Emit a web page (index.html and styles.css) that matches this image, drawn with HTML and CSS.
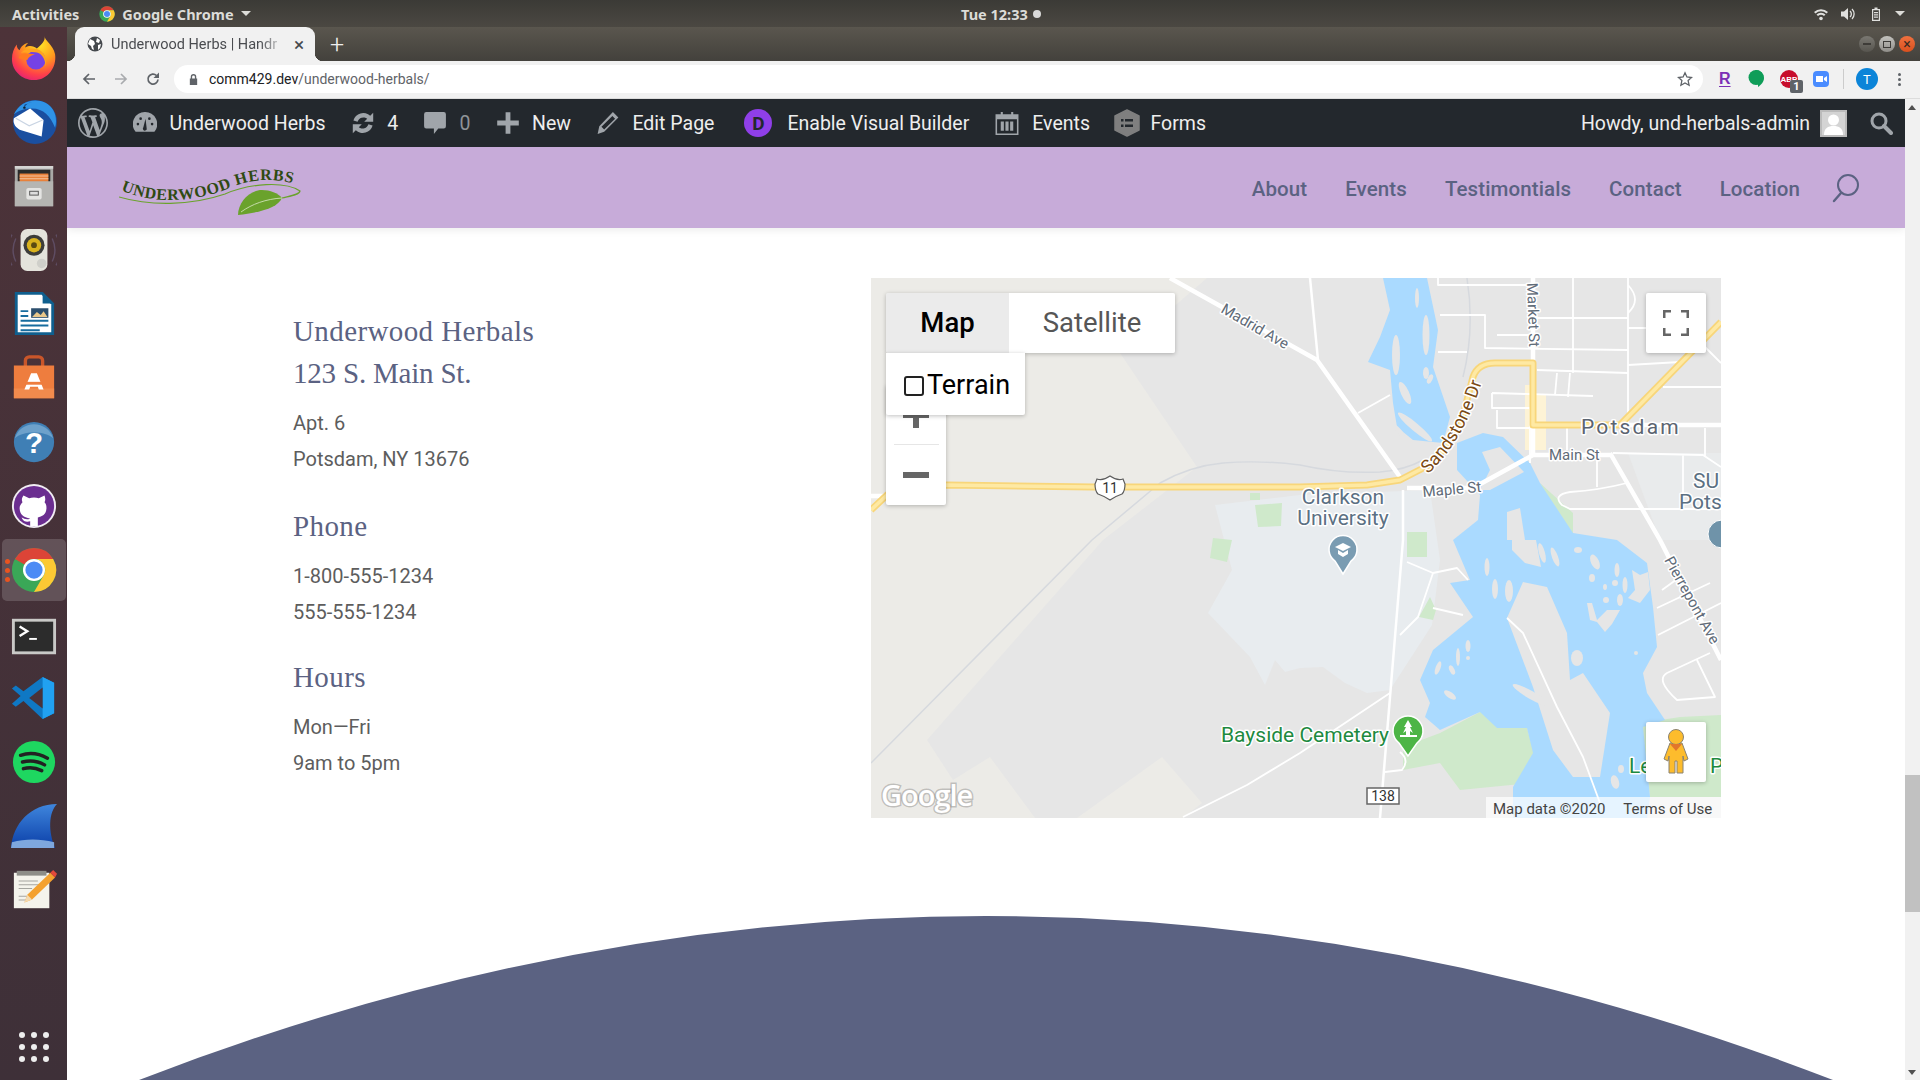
FILE: index.html
```html
<!DOCTYPE html>
<html lang="en">
<head>
<meta charset="utf-8">
<title>Underwood Herbs</title>
<link rel="stylesheet" href="styles.css">
</head>
<body>
<svg class="defs" width="0" height="0" aria-hidden="true">
  <symbol id="chrome" viewBox="0 0 48 48">
    <circle cx="24" cy="24" r="23" fill="#3aa757"/>
    <path d="M24 1a23 23 0 0 1 20 11.5H24a11.5 11.5 0 0 0-10 5.8L4.1 12.5A23 23 0 0 1 24 1z" fill="#dc4437"/>
    <path d="M44 12.500a23 23 0 0 1-20 34.500l10-17.200A11.500 11.500 0 0 0 24 12.500z" fill="#fcc934"/>
    <circle cx="24" cy="24" r="11.500" fill="#fff"/>
    <circle cx="24" cy="24" r="9" fill="#4c8bf5"/>
  </symbol>
</svg>

<header class="topbar">
  <div class="top-left">
    <span class="top-label">Activities</span>
    <span class="top-app"><svg class="ic16"><use href="#chrome"/></svg><span class="top-label">Google Chrome</span><i class="caret"></i></span>
  </div>
  <div class="top-clock"><span class="top-label">Tue 12:33</span><i class="clock-dot"></i></div>
  <div class="top-right">
    <svg class="tray" viewBox="0 0 16 16"><path d="M1 6a10 10 0 0 1 14 0l-1.500 1.500a8 8 0 0 0-11 0zM3.500 8.500a6.500 6.500 0 0 1 9 0L11 10a4.500 4.500 0 0 0-6 0z" fill="#e0e0de"/><circle cx="8" cy="12.500" r="1.800" fill="#e0e0de"/></svg>
    <svg class="tray" viewBox="0 0 16 16"><path d="M1 5.500h3L8 2v12l-4-3.500H1z" fill="#e0e0de"/><path d="M10 5a4 4 0 0 1 0 6M12 3a7 7 0 0 1 0 10" stroke="#e0e0de" stroke-width="1.300" fill="none"/></svg>
    <svg class="tray" viewBox="0 0 16 16"><path d="M4 3h2.500V1.500h3V3H12v12H4zM5.200 4.200v9.600h5.600V4.200z" fill="#e0e0de"/><path d="M6 6h4v1.200H6zM6 8.300h4v1.200H6zM6 10.600h4v1.200H6z" fill="#e0e0de"/></svg>
    <i class="caret caret-tray"></i>
  </div>
</header>

<div class="desk">
  <nav class="dock">
    <div class="dock-item">
      <svg class="dock-ic" viewBox="0 0 48 48"><defs><radialGradient id="ff" cx=".65" cy=".2" r=".95"><stop offset="0" stop-color="#ffe226"/><stop offset=".4" stop-color="#ff9a1e"/><stop offset=".72" stop-color="#ff3f4a"/><stop offset="1" stop-color="#d8148a"/></radialGradient></defs><path d="M35 1c0 5 9 9 11 19 2 14-8 27-22 27C11 47 1 37 1 25c0-6 2-11 5-15 0 3 1 5 3 6 1-4 5-7 9-8-3 3-3 4-3 5 5-3 9-1 12 1 5-4 9-8 8-13z" fill="url(#ff)"/><circle cx="26" cy="26" r="10" fill="#7542e5"/><path d="M10 19c6-6 15-6 20-3 5 3 8 9 6 17 0-9-5-15-11-15-5 0-9-1-15 1z" fill="#ffa41f"/><path d="M8 24c1-3 3-5 7-5 4 0 6 1 10 1-4 1-7 3-8 6-3 0-6-1-9-2z" fill="#ff7a1f"/></svg>
    </div>
    <div class="dock-item">
      <svg class="dock-ic" viewBox="0 0 48 48"><circle cx="25" cy="24" r="23" fill="#1a4fa0"/><path d="M3 16C9 3 24-2 36 4c9 5 13 15 10 26-5-12-12-20-24-20-8 0-14 2-19 6z" fill="#2f93e6"/><path d="M14 6l8-3c-5 1-8 4-8 7z" fill="#0d3d82"/><path d="M3 20l17-10 14 12-2 17-23-7C3 28 2 24 3 20z" fill="#fff"/><path d="M5 20l14 8 14-6" stroke="#c9d4e3" stroke-width="1.200" fill="none"/><circle cx="14" cy="9" r="1.300" fill="#123"/></svg>
    </div>
    <div class="dock-item">
      <svg class="dock-ic" viewBox="0 0 48 48"><path d="M4 3h40v42H4z" fill="#a9a9a6"/><path d="M4 3h40v3H4z" fill="#d5d5d3"/><path d="M7 7h34v13H7z" fill="#2b2b2b"/><path d="M9 11h30v9H9z" fill="#e8813a"/><path d="M9 13h30v1H9zM9 16h30v1H9z" fill="#f3c29d"/><path d="M4 19h40v26H4z" fill="#b5b5b2"/><rect x="16" y="26" width="16" height="12" rx="2" fill="#e4e4e2"/><rect x="19" y="29" width="10" height="5" fill="#555"/><rect x="20" y="30" width="8" height="3" fill="#ddd"/></svg>
    </div>
    <div class="dock-item">
      <svg class="dock-ic" viewBox="0 0 48 48"><path d="M5 12a28 28 0 0 0 0 24M43 12a28 28 0 0 1 0 24M1 8a34 34 0 0 0 0 32M47 8a34 34 0 0 1 0 32" stroke="#5f4d63" stroke-width="1.500" fill="none"/><rect x="10" y="2" width="28" height="44" rx="7" fill="#e4e3dc"/><circle cx="24" cy="19" r="11" fill="#3c3c3a"/><circle cx="24" cy="19" r="7.500" fill="#d9b21e"/><circle cx="24" cy="19" r="3" fill="#5b4b12"/><circle cx="32" cy="38" r="5" fill="#cfcfca"/></svg>
    </div>
    <div class="dock-item">
      <svg class="dock-ic" viewBox="0 0 48 48"><path d="M4 1h29l12 12v33H4z" fill="#0f5f8e"/><path d="M7 4h25l10 10v29H7z" fill="#fff"/><path d="M33 1l12 12H33z" fill="#0f5f8e"/><path d="M10 20h8v2h-8zM10 25h8v2h-8zM10 30h29v2H10zM10 35h29v2H10zM10 40h20v2H10z" fill="#176c9e"/><rect x="21" y="18" width="18" height="10" fill="#2c4f6e"/><path d="M22 27l5-5 4 3 3-4 4 6z" fill="#e9c78a"/></svg>
    </div>
    <div class="dock-item">
      <svg class="dock-ic" viewBox="0 0 48 48"><path d="M15 12V6a4 4 0 0 1 4-4h10a4 4 0 0 1 4 4v6" stroke="#c9562a" stroke-width="3.500" fill="none"/><path d="M3 11h42v34H3z" fill="#ee7d3e"/><path d="M3 35h42v10H3z" fill="#f28b4d"/><path d="M21 19h6l7 17h-5l-1-3h-8l-1 3h-5z" fill="#fff"/><rect x="15" y="28" width="18" height="3" fill="#ee7d3e"/></svg>
    </div>
    <div class="dock-item">
      <svg class="dock-ic" viewBox="0 0 48 48"><circle cx="24" cy="24" r="21" fill="#3f7fb5"/><path d="M4 20a21 21 0 0 1 40 0c-8-8-32-8-40 0z" fill="#6da1cb"/><text class="help-q" x="24" y="35" text-anchor="middle">?</text></svg>
    </div>
    <div class="dock-item">
      <svg class="dock-ic" viewBox="0 0 48 48"><circle cx="24" cy="24" r="23" fill="#f1edf3"/><circle cx="24" cy="24" r="21" fill="#6b2e90"/><path d="M13 13l6 3c3-1 7-1 10 0l6-3c1 3 1 5 0 7 2 2 2 4 2 6 0 7-5 9-9 10v9h-8v-5c-3 1-7 1-9-4 3 1 5 3 9 1-7-1-11-4-11-11 0-2 1-4 3-6-1-2-1-4 1-7z" fill="#fff"/></svg>
    </div>
    <div class="dock-item dock-active">
      <i class="run-dot"></i><i class="run-dot"></i><i class="run-dot"></i>
      <svg class="dock-ic"><use href="#chrome"/></svg>
    </div>
    <div class="dock-item dock-low">
      <svg class="dock-ic" viewBox="0 0 48 48"><rect x="1" y="5" width="46" height="37" fill="#c9c9c7"/><rect x="4" y="8" width="40" height="31" fill="#2c2c2c"/><path d="M9 13l8 5-8 5" stroke="#fff" stroke-width="2.500" fill="none"/><path d="M19 25h8v2h-8z" fill="#fff"/></svg>
    </div>
    <div class="dock-item">
      <svg class="dock-ic" viewBox="0 0 48 48"><path d="M33 2l12 6v32l-12 6-20-19-8 6-4-3 9-8-9-8 4-3 8 6z" fill="#0f78c4"/><path d="M33 2l12 6v32l-12 6z" fill="#21a1f1"/><path d="M33 13L19 24l14 11z" fill="#4a3239"/></svg>
    </div>
    <div class="dock-item">
      <svg class="dock-ic" viewBox="0 0 48 48"><circle cx="24" cy="24" r="22" fill="#1ed760"/><path d="M10 17c9-3 19-2 28 3M12 24c8-2 16-1 23 3M13 31c7-2 13-1 19 2" stroke="#222" stroke-width="3.600" stroke-linecap="round" fill="none"/></svg>
    </div>
    <div class="dock-item">
      <svg class="dock-ic" viewBox="0 0 48 48"><defs><linearGradient id="ws" x1="0" y1="0" x2="0" y2="1"><stop offset="0" stop-color="#3f86dd"/><stop offset="1" stop-color="#0b3fa8"/></linearGradient></defs><path d="M48 1C39 10 39 30 46 47H0C2 22 20 1 48 1z" fill="url(#ws)"/><path d="M1 41c14-4 29-4 44 0v6H0z" fill="#7ea7dd"/></svg>
    </div>
    <div class="dock-item">
      <svg class="dock-ic" viewBox="0 0 48 48"><rect x="3" y="6" width="37" height="37" fill="#f4f3ec"/><path d="M6 4h31v5H6z" fill="#8d8d88"/><path d="M8 14h20v1H8zM8 18h24v1H8zM8 22h14v1H8zM8 30h12v1H8zM8 34h8v1H8z" fill="#a5a5a0"/><path d="M14 37l3-8 24-23 5 5-24 23z" fill="#f4a12f"/><path d="M41 6l3-3 4 4-2 4z" fill="#e3493b"/><path d="M14 37l3-8 5 5z" fill="#f3d9b0"/></svg>
    </div>
    <div class="dock-apps">
      <i></i><i></i><i></i><i></i><i></i><i></i><i></i><i></i><i></i>
    </div>
  </nav>

  <div class="browser">
    <div class="tabstrip">
      <div class="tab">
        <svg class="fav" viewBox="0 0 16 16"><circle cx="8" cy="8" r="7.500" fill="#45494d"/><path d="M3 3l4 2 1 3-2 2 1 4-2-1-1-3-3-2zM10 2l3 2-1 3-3-1zM11 9l3-1-1 4-2 2z" fill="#fff"/></svg>
        <span class="tab-title">Underwood Herbs | Handr</span>
        <span class="tab-x">×</span>
      </div>
      <span class="tab-new">+</span>
      <div class="winctl">
        <span class="win-btn"><i class="win-min"></i></span>
        <span class="win-btn win-light"><i class="win-max"></i></span>
        <span class="win-btn win-close">×</span>
      </div>
    </div>
    <div class="toolbar">
      <svg class="nav-ic nav-back" viewBox="0 0 16 16"><path d="M14 8H3M8 3L3 8l5 5" stroke="#5f6368" stroke-width="1.700" fill="none"/></svg>
      <svg class="nav-ic nav-fwd" viewBox="0 0 16 16"><path d="M2 8h11M8 3l5 5-5 5" stroke="#a9abae" stroke-width="1.700" fill="none"/></svg>
      <svg class="nav-ic nav-reload" viewBox="0 0 16 16"><path d="M13 8.500A5 5 0 1 1 11.500 4.500" stroke="#5f6368" stroke-width="1.700" fill="none"/><path d="M14 1.500V7H8.500z" fill="#5f6368"/></svg>
      <div class="omnibox">
        <svg class="lock" viewBox="0 0 12 14"><path d="M3 6V4a3 3 0 0 1 6 0v2h1v7H2V6zm1.500 0h3V4a1.500 1.500 0 0 0-3 0z" fill="#5f6368"/></svg>
        <span class="url"><b>comm429.dev</b>/underwood-herbals/</span>
        <svg class="star" viewBox="0 0 16 16"><path d="M8 1.800l1.900 4.200 4.600.5-3.400 3.100 1 4.600L8 11.900l-4.100 2.300 1-4.600L1.500 6.500l4.600-.5z" stroke="#5f6368" stroke-width="1.300" fill="none"/></svg>
      </div>
      <div class="exts">
        <span class="ext-r">R</span>
        <svg class="ext" viewBox="0 0 18 20"><path d="M9 1a8 8 0 0 1 8 8c0 4-3 7-6 9v-2.500A8 8 0 0 1 9 1z" fill="#0f9d58"/><circle cx="9" cy="8.500" r="7.500" fill="#0f9d58"/></svg>
        <span class="ext-abp">ABP<em>1</em></span>
        <svg class="ext ext-zoom" viewBox="0 0 18 18"><rect x="1" y="1" width="16" height="16" rx="4" fill="#4a8cff"/><path d="M4 6h7v6H4zM12 8l3-2v6l-3-2z" fill="#fff"/></svg>
        <i class="ext-sep"></i>
        <span class="profile">T</span>
        <span class="kebab"><i></i><i></i><i></i></span>
      </div>
    </div>

    <div class="viewport">
      <div class="column">
        <div class="adminbar">
          <svg class="ab-wp" viewBox="0 0 20 20"><path d="M20 10c0-5.510-4.490-10-10-10C4.480 0 0 4.490 0 10c0 5.520 4.480 10 10 10 5.510 0 10-4.480 10-10zM7.780 15.370L4.370 6.220c.55-.02 1.170-.08 1.170-.08.5-.06.44-1.130-.06-1.110 0 0-1.450.11-2.370.11-.18 0-.37 0-.58-.01C4.120 2.690 6.870 1.110 10 1.110c2.330 0 4.450.87 6.050 2.340-.68-.11-1.650.39-1.650 1.580 0 .74.45 1.360.9 2.100.35.61.55 1.360.55 2.460 0 1.490-1.400 5-1.400 5l-3.030-8.370c.54-.02.82-.17.82-.17.5-.05.44-1.250-.06-1.220 0 0-1.440.12-2.380.12-.87 0-2.330-.12-2.330-.12-.5-.03-.56 1.200-.06 1.220l.92.08 1.260 3.410zM17.410 10c.24-.64.74-1.870.43-4.250.7 1.290 1.050 2.710 1.050 4.250 0 3.290-1.730 6.240-4.520 7.780 1.010-2.710 2.020-5.020 3.040-7.780zM6.100 18.090C3.120 16.650 1.110 13.530 1.110 10c0-1.300.23-2.480.72-3.590C3.250 10.300 4.670 14.200 6.100 18.090zm4.030-6.630l2.580 6.980c-.86.29-1.760.45-2.710.45-.79 0-1.570-.11-2.290-.33.81-2.380 1.620-4.740 2.420-7.100z" fill="#a0a5aa"/></svg>
          <div class="ab-item">
            <svg class="ab-ic" viewBox="1 1 22 22"><path d="M12 2a11 11 0 0 0-9 17.500l.5.500h17l.5-.500A11 11 0 0 0 12 2z" fill="#a0a5aa"/><path d="M12.500 8l-2 8a1.800 1.800 0 1 0 3 .5z" fill="#23282d"/><circle cx="5.500" cy="13" r="1.200" fill="#23282d"/><circle cx="8" cy="8" r="1.200" fill="#23282d"/><circle cx="16" cy="8" r="1.200" fill="#23282d"/><circle cx="18.500" cy="13" r="1.200" fill="#23282d"/></svg>
            <span>Underwood Herbs</span>
          </div>
          <div class="ab-item">
            <svg class="ab-ic" viewBox="2 2 20 20"><path d="M4 10a8.500 8.500 0 0 1 14-4l2.500-2.500V11h-7.500l2.500-2.500A5 5 0 0 0 7.500 11zM20 14a8.500 8.500 0 0 1-14 4l-2.500 2.500V13H11l-2.500 2.500a5 5 0 0 0 8 -2.500z" fill="#a0a5aa"/></svg>
            <span>4</span>
          </div>
          <div class="ab-item ab-dim">
            <svg class="ab-ic" viewBox="1 2 22 22"><path d="M4 3h16a2 2 0 0 1 2 2v11a2 2 0 0 1-2 2h-5l-4 5v-5H4a2 2 0 0 1-2-2V5a2 2 0 0 1 2-2z" fill="#a0a5aa"/></svg>
            <span>0</span>
          </div>
          <div class="ab-item">
            <svg class="ab-ic" viewBox="2 2 20 20"><path d="M10 3h4v7h7v4h-7v7h-4v-7H3v-4h7z" fill="#a0a5aa"/></svg>
            <span>New</span>
          </div>
          <div class="ab-item">
            <svg class="ab-ic" viewBox="2 1 21 22"><path d="M17 2l5 5L9 20l-6 2 1.500-7zM6.500 15.500l2.500 2.500 10-10-2.500-2.500z" fill="#a0a5aa"/></svg>
            <span>Edit Page</span>
          </div>
          <div class="ab-item ab-divi">
            <span class="divi-d">D</span>
            <span>Enable Visual Builder</span>
          </div>
          <div class="ab-item ab-events">
            <svg class="ab-ic" viewBox="1 1 22 23"><path d="M6 2h2v4H6zM16 2h2v4h-2z" fill="#a0a5aa"/><path d="M1 4h22v20H1zM2.500 9v13.500h19V9z" fill="#a0a5aa"/><path d="M6 11h3v9H6zM10.500 11h3v9h-3zM15 11h3v9h-3z" fill="#a0a5aa"/></svg>
            <span>Events</span>
          </div>
          <div class="ab-item ab-forms">
            <svg class="ab-ic ab-hex" viewBox="0 0 26 28"><path d="M13 1l12 6v14l-12 6-12-6V7z" fill="#7f7f7f" stroke="#7f7f7f" stroke-linejoin="round" stroke-width="1.500"/><path d="M7 10h2.500v2.500H7zM11 10h8v2.500h-8zM7 15.500h2.500V18H7zM11 15.500h8V18h-8z" fill="#23282d"/></svg>
            <span>Forms</span>
          </div>
          <div class="ab-right">
            <span>Howdy, und-herbals-admin</span>
            <svg class="ab-avatar" viewBox="0 0 27 27"><rect width="27" height="27" fill="#bbb"/><rect x="2" y="2" width="23" height="23" fill="#d4d4d4"/><circle cx="13.500" cy="10" r="5.500" fill="#fff"/><path d="M4 25c0-7 4-9 9.500-9S23 18 23 25z" fill="#fff"/></svg>
            <svg class="ab-search" viewBox="0 0 24 24"><circle cx="10" cy="10" r="7" stroke="#a0a5aa" stroke-width="3" fill="none"/><path d="M15 15l7 7" stroke="#a0a5aa" stroke-width="4" stroke-linecap="round"/></svg>
          </div>
        </div>

        <main class="page">
          <header class="sitehead">
            <svg class="logo" viewBox="119 160 182 56">
              <defs><path id="logoarc" d="M121 190C150 203 190 205 235 186C255 178 280 178 300 186"/></defs>
              <text class="logo-text"><textPath href="#logoarc">UNDERWOOD HERBS</textPath></text>
              <path d="M119 197C150 206 190 206 225 194C250 183 285 181 300 191C299 195 290 196 282 198" stroke="#6aa22c" stroke-width="1.200" fill="none"/>
              <path d="M238 215C238 202 250 190 262 190C270 190 278 193 282 198C277 208 262 212 238 215z" fill="#6aa22c"/>
              <path d="M241 212C252 204 266 199 282 198" stroke="#d9e8c6" stroke-width=".8" fill="none"/>
            </svg>
            <nav class="sitenav">
              <a>About</a><a>Events</a><a>Testimontials</a><a>Contact</a><a>Location</a>
              <svg class="nav-search" viewBox="0 0 28 30"><circle cx="16" cy="12" r="10" stroke="#5b6282" stroke-width="2" fill="none"/><path d="M9 20L2 28" stroke="#5b6282" stroke-width="2.400" stroke-linecap="round"/></svg>
            </nav>
          </header>

          <section class="contact">
            <div class="info">
              <h2 class="info-first">Underwood Herbals<br><span class="addr">123 S. Main St.</span></h2>
              <p>Apt. 6<br>Potsdam, NY 13676</p>
              <h2 class="info-phone">Phone</h2>
              <p>1-800-555-1234<br>555-555-1234</p>
              <h2 class="info-hours">Hours</h2>
              <p>Mon—Fri<br>9am to 5pm</p>
            </div>
            <div class="map">
              <svg class="map-art" viewBox="871 278 850 540" width="850" height="540">
                <rect x="871" y="278" width="850" height="540" fill="#ecebe7"/>
                <path d="M1207 278L1120 353L1197 467L1103 540L927 740L953 780L990 757L1035 818L1077 818L1162 757L1202 803L1183 818L1721 818V278z" fill="#e6e6e6"/>
                <path d="M1215 505L1300 495L1430 490L1440 560L1432 625L1390 690L1367 693L1345 683L1323 667L1300 668L1285 672L1275 660L1265 685L1250 657L1208 613L1232 570z" fill="#e8ecef"/>
                <path d="M1628 453H1721V540L1660 540z" fill="#e9ebec"/>
                <path d="M1525 385H1532V450H1525zM1534 395H1546V450H1534z" fill="#fdf3d6"/>
                <g fill="#cfe9cb">
                  <path d="M1255 505L1282 503L1281 526L1258 527zM1250 493H1260V500H1250zM1213 538L1232 540L1227 562L1210 558zM1407 532H1427V557H1407zM1430 597L1436 610L1433 620L1419 617zM1540 483L1573 513V537L1568 532z"/>
                  <path d="M1403 747L1440 733L1480 712L1495 710L1497 728L1527 728L1534 753L1530 783L1460 790L1440 763L1403 770z"/>
                  <path d="M1642 723L1680 717L1721 715V797H1650z"/>
                </g>
                <g fill="#aadaff">
                  <path d="M1383 278H1427L1438 330L1433 367L1450 417L1443 443L1413 440L1397 427L1393 403L1390 370L1368 362L1380 337L1390 310z"/>
                  <path d="M1457 443L1483 433L1503 437L1530 463L1540 483L1573 533L1617 540L1647 563L1653 607L1657 647L1643 673L1647 693L1665 720L1643 727L1650 797L1647 818H1513L1513 787L1533 753L1527 728L1497 728L1480 712L1440 730L1425 717L1430 703L1420 680L1433 650L1473 617L1450 583L1470 580L1453 540L1478 520L1480 495L1457 470z"/>
                </g>
                <g fill="#e6e6e6">
                  <path d="M1507 618L1523 582L1547 587L1567 633L1570 680L1583 673L1610 713L1600 777L1573 777L1553 750L1533 687z"/>
                  <path d="M1482 452L1500 447L1524 472L1490 490L1480 490L1490 470zM1507 512L1520 508L1525 540H1507zM1512 540H1536L1541 567L1525 563L1512 550z"/>
                  <ellipse cx="1417" cy="298" rx="2" ry="10"/><ellipse cx="1426" cy="335" rx="3.500" ry="20"/><ellipse cx="1396" cy="355" rx="4" ry="20"/><ellipse cx="1426" cy="373" rx="3" ry="6"/><ellipse cx="1430" cy="379" rx="2.500" ry="5" transform="rotate(25 1430 379)"/><ellipse cx="1405" cy="393" rx="4" ry="12" transform="rotate(-25 1405 393)"/><ellipse cx="1415" cy="427" rx="4" ry="22" transform="rotate(-50 1415 427)"/><ellipse cx="1399" cy="431" rx="2.500" ry="8" transform="rotate(-40 1399 431)"/>
                  <ellipse cx="1487" cy="567" rx="2.500" ry="9"/><ellipse cx="1495" cy="589" rx="3" ry="10"/><ellipse cx="1509" cy="591" rx="4" ry="11"/><ellipse cx="1542" cy="553" rx="3" ry="10" transform="rotate(-15 1542 553)"/><ellipse cx="1555" cy="557" rx="3" ry="10" transform="rotate(-20 1555 557)"/><ellipse cx="1578" cy="550" rx="4" ry="3"/><ellipse cx="1595" cy="562" rx="4" ry="8" transform="rotate(-25 1595 562)"/><ellipse cx="1617" cy="570" rx="2.500" ry="7"/><ellipse cx="1592" cy="578" rx="3" ry="4"/><ellipse cx="1605" cy="587" rx="2" ry="3"/><ellipse cx="1615" cy="583" rx="3" ry="3"/><ellipse cx="1625" cy="585" rx="2.500" ry="8"/><ellipse cx="1606" cy="600" rx="3" ry="3"/><ellipse cx="1620" cy="600" rx="3" ry="6"/>
                  <path d="M1632 570L1640 575L1648 572L1650 590L1640 603L1628 598L1635 590z"/>
                  <path d="M1587 603L1592 603L1597 620L1607 610L1620 610L1612 624L1605 632L1597 622L1590 620z"/>
                  <ellipse cx="1468" cy="646" rx="2.500" ry="6"/><ellipse cx="1458" cy="657" rx="2" ry="9"/><ellipse cx="1438" cy="668" rx="2.500" ry="7" transform="rotate(20 1438 668)"/><ellipse cx="1452" cy="670" rx="2.500" ry="5" transform="rotate(-25 1452 670)"/><ellipse cx="1468" cy="658" rx="2" ry="2"/><ellipse cx="1450" cy="695" rx="7" ry="3" transform="rotate(35 1450 695)"/><ellipse cx="1577" cy="658" rx="6" ry="8"/><ellipse cx="1615" cy="782" rx="4" ry="7" transform="rotate(-15 1615 782)"/><ellipse cx="1621" cy="769" rx="3" ry="4"/><ellipse cx="1636" cy="653" rx="2" ry="2"/><ellipse cx="1531" cy="695" rx="21" ry="4" transform="rotate(30 1531 695)"/>
                </g>
                <g class="rail">
                  <path d="M871 763L1092 540L1160 483Q1190 466 1223 463Q1260 460 1300 465Q1340 474 1380 472Q1405 470 1423 460"/>
                  <path d="M1467 278Q1475 330 1463 377"/>
                </g>
                <g class="road r1">
                  <path d="M1438 278V285H1533M1573 278V373M1628 278V425M1440 315H1485V348L1628 350M1533 318H1628M1497 335H1533M1438 352H1467M1537 370L1628 373M1557 373L1555 395M1570 373L1568 397M1492 393L1593 396M1492 393V408H1530M1497 410V428H1530M1628 365L1680 362M1663 387H1721M1628 285Q1642 300 1628 313M1628 328H1646M1705 347L1721 363M1613 453L1703 455L1721 467M1567 427V450M1597 457V487M1683 455V503M1705 428V457M1627 483Q1600 490 1570 492Q1552 495 1562 505L1570 509H1721M1358 413L1390 395M1407 562L1433 573L1457 568L1468 580M1433 573L1418 617L1400 635M1433 608L1463 615M1657 608L1710 583M1658 635L1721 603M1662 590L1680 577M1710 653L1667 673Q1655 680 1677 700L1715 697L1697 660M1183 817L1247 785L1300 753L1390 693M1400 752Q1410 760 1402 770L1385 772M1530 408V463M1507 618L1523 633L1557 707L1583 757L1600 803"/>
                </g>
                <g class="road r2">
                  <path d="M1310 278L1318 360M1403 490L1403 540L1380 818"/>
                </g>
                <g class="road r3">
                  <path d="M1170 278L1317 360L1400 477M871 496H887M1407 488H1473L1533 455H1610M1533 278V363M1533 425V455M1610 453L1660 540L1721 660M1620 425H1721"/>
                </g>
                <g class="hwy-o"><path d="M871 510L887 495L947 485L1093 487H1300L1367 485L1400 480L1433 463L1460 427L1473 377Q1478 363 1495 363H1533V425H1620L1721 322"/></g>
                <g class="hwy-i"><path d="M871 510L887 495L947 485L1093 487H1300L1367 485L1400 480L1433 463L1460 427L1473 377Q1478 363 1495 363H1533V425H1620L1721 322"/></g>

                <defs><path id="sandarc" d="M1428 474Q1463 442 1482 382"/></defs>
                <text class="lab lab-road" transform="translate(1220 312) rotate(30)">Madrid Ave</text>
                <text class="lab lab-road" transform="translate(1527 283) rotate(88)">Market St</text>
                <text class="lab lab-road" transform="translate(1664 560) rotate(61)">Pierrepont Ave</text>
                <text class="lab lab-hw"><textPath href="#sandarc">Sandstone Dr</textPath></text>
                <text class="lab lab-road" x="1549" y="460">Main St</text>
                <text class="lab lab-road" transform="translate(1423 497) rotate(-5)">Maple St</text>
                <text class="lab lab-city" x="1581" y="434">Potsdam</text>
                <text class="lab lab-poi" x="1343" y="504" text-anchor="middle">Clarkson</text>
                <text class="lab lab-poi" x="1343" y="525" text-anchor="middle">University</text>
                <text class="lab lab-poi" x="1693" y="488">SU</text>
                <text class="lab lab-poi" x="1679" y="509">Pots</text>
                <text class="lab lab-green" x="1221" y="742">Bayside Cemetery</text>
                <text class="lab lab-green" x="1629" y="773">Le</text>
                <text class="lab lab-green" x="1710" y="773">P</text>

                <path d="M1343 574L1335 561A14 14 0 1 1 1351 561z" fill="#7a9cb2" stroke="#fff" stroke-width="1.500"/>
                <path d="M1335 547L1343 543L1351 547L1343 551zM1338 550L1343 553L1348 550V554L1343 557L1338 554z" fill="#fff"/>
                <circle cx="1722" cy="534" r="14" fill="#6f93a9" stroke="#fff"/>
                <path d="M1408 756L1399 743A15 15 0 1 1 1417 743z" fill="#4db546" stroke="#fff" stroke-width="1.500"/>
                <path d="M1406 735V731L1403 733L1406 727L1404 727L1408 720L1412 727L1410 727L1413 733L1410 731V735zM1400 735H1417V737H1400z" fill="#fff"/>

                <path d="M1097 479Q1103 481 1110 476Q1117 481 1123 479L1125 484Q1125 491 1122 494Q1116 496 1110 500Q1104 496 1098 494Q1095 491 1095 484z" fill="#fff" stroke="#5c5c5c" stroke-width="1.200"/>
                <text class="shield" x="1110" y="493" text-anchor="middle">11</text>
                <rect x="1367" y="788" width="32" height="16" fill="#fff" stroke="#666" stroke-width="1.500"/>
                <text class="shield" x="1383" y="801" text-anchor="middle">138</text>
                <text class="google" x="881" y="806">Google</text>
              </svg>

              <div class="maptype">
                <span class="mt-btn mt-on">Map</span>
                <span class="mt-btn mt-sat">Satellite</span>
              </div>
              <div class="zoomctl">
                <div class="zoom-plus"></div>
                <div class="zoom-sep"></div>
                <div class="zoom-minus"></div>
              </div>
              <div class="terrain"><i class="check"></i>Terrain</div>
              <div class="fullscreen">
                <svg viewBox="0 0 26 26" width="26" height="26"><path d="M1 8V1H8M18 1H25V8M25 18V25H18M8 25H1V18" stroke="#666" stroke-width="3" fill="none"/></svg>
              </div>
              <div class="pegman">
                <svg viewBox="0 0 26 46" width="26" height="46"><path d="M7 14H19L25 30L21 32L20 27V44H14V32H12V44H6V27L5 32L1 30z" fill="#fdbc2c" stroke="#8a8270"/><circle cx="13" cy="8" r="7.500" fill="#fdbc2c" stroke="#8a8270"/><path d="M7 15H19L13 22z" fill="#e2762b"/></svg>
              </div>
              <div class="attrib"><span>Map data ©2020</span><span class="attrib-terms">Terms of Use</span></div>
            </div>
          </section>

          <svg class="divider" viewBox="0 0 1838 164" preserveAspectRatio="none" width="1838" height="164"><path d="M72 164Q919 -164 1766 164z" fill="#5b6282"/></svg>
        </main>
      </div>
      <aside class="scrollbar">
        <i class="sb-up"></i>
        <i class="sb-thumb"></i>
        <i class="sb-down"></i>
      </aside>
    </div>
  </div>
</div>
</body>
</html>
```
FILE: styles.css
```css
* { box-sizing: border-box; }
html, body { margin: 0; height: 100%; }
body { width: 1920px; height: 1080px; overflow: hidden; font-family: Roboto, sans-serif; background: #fff; display: flex; flex-direction: column; }
.defs { position: absolute; }
i { display: block; font-style: normal; }

/* GNOME top bar */
.topbar { height: 27px; flex: none; position: relative; display: flex; align-items: center; justify-content: space-between; background: linear-gradient(#3b3a36, #4b4842); padding: 0 12px; }
.top-label { font: 700 14.500px "Noto Sans", sans-serif; color: #dcdcd8; white-space: nowrap; }
.top-left { display: flex; align-items: center; gap: 20px; }
.top-app { display: flex; align-items: center; gap: 7px; }
.ic16 { width: 16px; height: 16px; }
.caret { width: 0; height: 0; border: 5px solid transparent; border-top: 5px solid #dcdcd8; border-bottom: 0; margin-left: 0; }
.top-clock { position: absolute; left: 961px; display: flex; align-items: center; gap: 5px; }
.clock-dot { width: 8px; height: 8px; border-radius: 50%; background: #d8d8d8; }
.top-right { display: flex; align-items: center; gap: 11.500px; padding-right: 3px; }
.tray { width: 16px; height: 16px; }

.desk { flex: 1; display: flex; min-height: 0; }

/* Dock */
.dock { width: 67px; flex: none; display: flex; flex-direction: column; align-items: center; background: linear-gradient(#4d3339, #3e3038); margin-top: -1px; }
.dock-item { width: 64px; height: 64px; flex: none; display: flex; align-items: center; justify-content: center; position: relative; }
.dock-ic { width: 46px; height: 46px; }
.dock-active { background: rgba(255,255,255,.16); border-radius: 5px; height: 62px; margin: 1px 0; }
.dock-low { padding-top: 5px; }
.run-dot { position: absolute; left: 3px; width: 5px; height: 5px; border-radius: 50%; background: #e95420; top: 20px; }
.run-dot + .run-dot { top: 29px; }
.run-dot + .run-dot + .run-dot { top: 38px; }
.help-q { font: 700 31px "Liberation Sans", sans-serif; fill: #fff; }
.dock-apps { margin-top: auto; margin-bottom: 18px; display: grid; grid-template-columns: repeat(3, 6px); gap: 6px; }
.dock-apps i { width: 6px; height: 6px; border-radius: 50%; background: #eee; }

.browser { flex: 1; min-width: 0; display: flex; flex-direction: column; }

/* Chrome tab strip */
.tabstrip { height: 34px; flex: none; display: flex; align-items: center; background: linear-gradient(#5a564e, #43413c); padding-left: 8px; }
.tab { width: 240px; height: 34px; align-self: flex-end; background: #f1f1f1; border-radius: 9px 9px 0 0; display: flex; align-items: center; padding: 0 10px 0 12px; position: relative; }
.tab::before, .tab::after { content: ""; position: absolute; bottom: 0; width: 8px; height: 8px; }
.tab::before { left: -8px; background: radial-gradient(circle at 0 0, transparent 8px, #f1f1f1 8.500px); }
.tab::after { right: -8px; background: radial-gradient(circle at 100% 0, transparent 8px, #f1f1f1 8.500px); }
.fav { width: 16px; height: 16px; flex: none; }
.tab-title { font-size: 14.500px; color: #4a4c50; margin-left: 8px; width: 175px; flex: none; white-space: nowrap; overflow: hidden; -webkit-mask-image: linear-gradient(90deg, #000 85%, transparent); mask-image: linear-gradient(90deg, #000 85%, transparent); }
.tab-x { font-size: 19px; line-height: 1; color: #45494d; margin-left: 8px; }
.tab-new { font-size: 25px; font-weight: 300; color: #eee; margin-left: 15px; line-height: 1; }
.winctl { margin-left: auto; display: flex; gap: 4px; padding-right: 5px; }
.win-btn { width: 16px; height: 16px; border-radius: 50%; background: linear-gradient(#7a7872, #57554f); display: flex; align-items: center; justify-content: center; color: #3a2a22; font-size: 14px; line-height: 1; }
.win-light { background: linear-gradient(#c3c2be, #908e89); }
.win-close { background: linear-gradient(#f0713f, #d9501e); }
.win-min { width: 8px; height: 1.500px; background: #3e3c38; }
.win-max { width: 8px; height: 7px; border: 1.500px solid #3e3c38; }

/* Chrome toolbar */
.toolbar { height: 38px; flex: none; display: flex; align-items: center; background: #f1f1f1; border-bottom: 1px solid #dcdcdc; padding: 0 0 1px 14px; }
.nav-ic { width: 16px; height: 16px; flex: none; margin-right: 16px; }
.nav-reload { margin-right: 13px; }
.omnibox { width: 1529px; height: 28px; background: #fff; border-radius: 14px; display: flex; align-items: center; padding: 0 10px 0 14px; }
.lock { width: 11px; height: 13px; }
.url { font-size: 14px; color: #5f6368; margin-left: 10px; }
.url b { font-weight: 400; color: #202124; }
.star { width: 16px; height: 16px; margin-left: auto; }
.exts { flex: 1; display: flex; align-items: center; position: relative; padding-left: 16px; }
.ext-r { font: 700 16px "Liberation Sans", sans-serif; color: #7b2fb5; width: 14px; text-decoration: underline; text-underline-offset: 2px; }
.ext { width: 18px; height: 20px; margin-left: 14px; }
.ext-abp { width: 18px; height: 18px; border-radius: 50%; background: #c70d2c; color: #fff; font: 700 8px "Liberation Sans", sans-serif; display: flex; align-items: center; justify-content: center; margin-left: 15px; position: relative; }
.ext-abp em { position: absolute; left: 10px; top: 10px; width: 13px; height: 13px; border-radius: 2px; background: #5f6368; font: 700 11px/13px Roboto, sans-serif; text-align: center; }
.ext-zoom { margin-left: 14px; }
.ext-sep { width: 1px; height: 20px; background: #ccc; margin-left: 13px; }
.profile { width: 22px; height: 22px; border-radius: 50%; background: #0b84d8; color: #fff; font-size: 13px; display: flex; align-items: center; justify-content: center; margin-left: 12px; }
.kebab { display: flex; flex-direction: column; gap: 2px; margin-left: 20px; }
.kebab i { width: 3px; height: 3px; border-radius: 50%; background: #5f6368; }

.viewport { flex: 1; min-height: 0; display: flex; }
.column { width: 1838px; flex: none; display: flex; flex-direction: column; min-height: 0; }

/* WP admin bar */
.adminbar { height: 48px; flex: none; display: flex; align-items: center; gap: 25px; background: #23282d; color: #eee; font-size: 19.500px; padding-left: 11px; }
.ab-wp { width: 30px; height: 30px; flex: none; }
.ab-item { display: flex; align-items: center; gap: 12.500px; }
.ab-ic { width: 24px; height: 24px; flex: none; }
.ab-hex { width: 26px; height: 28px; }
.ab-dim span { color: #8f9499; }
.divi-d { width: 28px; height: 28px; border-radius: 50%; background: #8f3fe8; color: #23282d; font-weight: 700; font-size: 19px; display: flex; align-items: center; justify-content: center; }
.ab-divi { margin-left: 5px; gap: 15px; }
.ab-events { margin-left: 1px; gap: 13px; }
.ab-forms { margin-left: -1px; gap: 10.500px; }
.ab-right { margin-left: auto; display: flex; align-items: center; gap: 10px; padding-right: 12px; }
.ab-avatar { width: 27px; height: 27px; }
.ab-search { width: 24px; height: 24px; margin-left: 12px; }

/* Page */
.page { flex: 1; min-height: 0; overflow: hidden; display: flex; flex-direction: column; }
.sitehead { height: 81px; flex: none; background: #c7abd9; display: flex; align-items: center; padding-left: 52px; box-shadow: 0 2px 8px rgba(0,0,0,.08); position: relative; }
.logo { width: 182px; height: 56px; }
.logo-text { font: 700 16px "Liberation Serif", serif; fill: #2f4a12; letter-spacing: .6px; }
.sitenav { margin-left: auto; display: flex; align-items: center; gap: 38px; padding: 3px 45px 0 0; }
.sitenav a { font-size: 20.500px; font-weight: 500; color: #5b6282; letter-spacing: .1px; }
.nav-search { width: 28px; height: 30px; margin: -3px 0 0 -6px; }

.contact { flex: none; display: grid; grid-template-columns: 578px 850px; padding: 50px 0 0 226px; }
.info { color: #5d5d5d; }
.info h2 { margin: 0; font: 400 29px/42px "Liberation Serif", serif; color: #5b6282; letter-spacing: .4px; }
.info h2.info-first { margin-top: 32px; }
.info h2.info-phone { margin-top: 28px; }
.info h2.info-hours { margin-top: 26px; }
.addr { letter-spacing: -.2px; }
.info p { margin: 12px 0 0; font-size: 20px; line-height: 35.500px; }

/* Map */
.map { width: 850px; height: 540px; position: relative; overflow: hidden; font-family: Roboto, sans-serif; }
.map-art { display: block; }
.rail path { fill: none; stroke: #d6d9de; stroke-width: 1.500; }
.road path { fill: none; stroke: #fff; stroke-linejoin: round; }
.r1 path { stroke-width: 1.800; }
.r2 path { stroke-width: 2.500; }
.r3 path { stroke-width: 4.500; }
.hwy-o path { fill: none; stroke: #f8d67a; stroke-width: 7; stroke-linejoin: round; }
.hwy-i path { fill: none; stroke: #fee9a3; stroke-width: 3.500; stroke-linejoin: round; }
.lab { font-family: Roboto, sans-serif; paint-order: stroke; stroke: #fff; stroke-width: 3px; stroke-linejoin: round; }
.lab-road { font-size: 15px; fill: #5f6b78; }
.lab-hw { font-size: 18px; fill: #7a4a14; }
.lab-city { font-size: 21px; fill: #5b6470; letter-spacing: 2.200px; }
.lab-poi { font-size: 21px; fill: #5b7083; }
.lab-green { font-size: 21px; fill: #1e8a3f; }
.shield { font: 400 14px Roboto, sans-serif; fill: #333; }
.google { font: 600 29px "Open Sans", sans-serif; fill: #fff; paint-order: stroke; stroke: rgba(0,0,0,.2); stroke-width: 3px; letter-spacing: -1px; }

.maptype { position: absolute; left: 15px; top: 15px; display: flex; height: 60px; box-shadow: 0 1px 4px rgba(0,0,0,.25); border-radius: 2px; overflow: hidden; }
.mt-btn { display: flex; align-items: center; justify-content: center; font-size: 27.500px; background: #fff; color: #565656; padding-bottom: 2px; }
.mt-on { width: 123px; background: #ebebeb; color: #000; font-weight: 500; }
.mt-sat { width: 166px; }
.zoomctl { position: absolute; left: 15px; top: 107px; width: 60px; height: 120px; background: #fff; border-radius: 2px; box-shadow: 0 1px 4px rgba(0,0,0,.25); }
.zoom-plus { position: absolute; left: 17px; top: 27px; width: 26px; height: 6px; background: #666; }
.zoom-plus::after { content: ""; position: absolute; left: 10px; top: -10px; width: 6px; height: 26px; background: #666; }
.zoom-sep { position: absolute; left: 8px; top: 59px; width: 45px; height: 1px; background: #e6e6e6; }
.zoom-minus { position: absolute; left: 17px; top: 87px; width: 26px; height: 6px; background: #666; }
.terrain { position: absolute; left: 15px; top: 75px; width: 139px; height: 62px; background: #fff; border-radius: 0 0 2px 2px; box-shadow: 0 1px 4px rgba(0,0,0,.25); display: flex; align-items: center; padding: 2px 0 0 18px; font-size: 27px; color: #000; }
.check { width: 20px; height: 20px; border: 2px solid #222; border-radius: 3px; margin: 1px 3px 0 0; }
.fullscreen, .pegman { position: absolute; left: 775px; width: 60px; height: 60px; background: #fff; border-radius: 2px; box-shadow: 0 1px 4px rgba(0,0,0,.25); display: flex; align-items: center; justify-content: center; }
.fullscreen { top: 15px; }
.pegman { top: 444px; }
.attrib { position: absolute; right: 0; bottom: 0; width: 235px; height: 21px; background: rgba(255,255,255,.7); display: flex; align-items: center; font-size: 15px; color: #444; padding: 2px 0 0 7px; }
.attrib-terms { margin-left: 18px; }

.divider { flex: none; margin-top: 98px; display: block; }

/* Scrollbar */
.scrollbar { width: 15px; flex: none; background: #f1f1f1; position: relative; }
.sb-up { position: absolute; left: 3px; top: 6px; width: 0; height: 0; border: 4.500px solid transparent; border-bottom: 5px solid #505050; border-top: 0; }
.sb-thumb { position: absolute; left: 0; right: 0; top: 676px; height: 137px; background: #c1c1c1; }
.sb-down { position: absolute; left: 3px; bottom: 5px; width: 0; height: 0; border: 4.500px solid transparent; border-top: 5px solid #505050; border-bottom: 0; }
```
